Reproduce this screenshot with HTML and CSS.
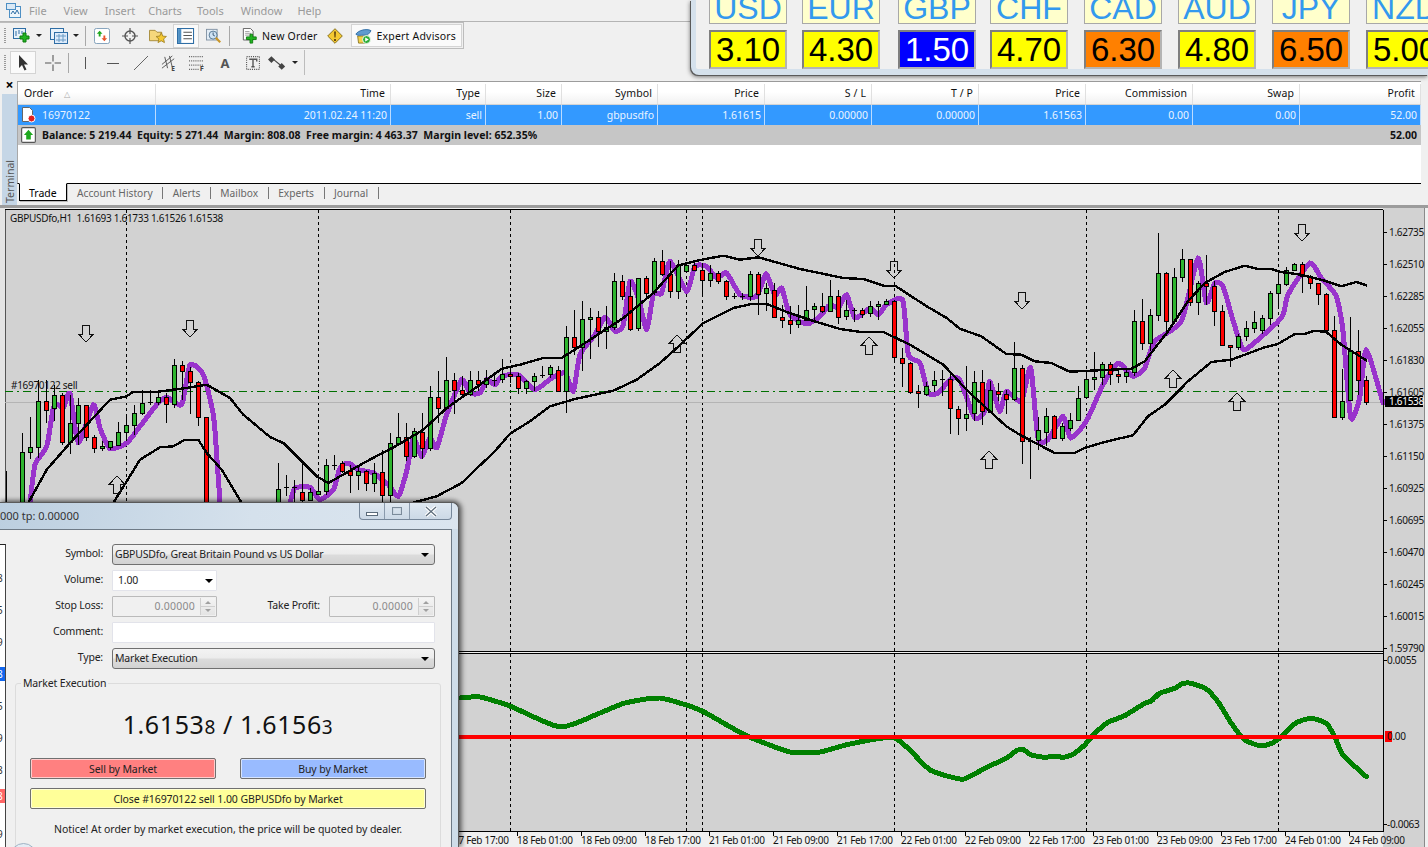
FILE: index.html
```html
<!DOCTYPE html>
<html lang="en">
<head>
    <meta charset="UTF-8">
    <meta name="viewport" content="width=device-width, initial-scale=1.0">
    <title>MetaTrader - GBPUSDfo,H1</title>
    <link rel="stylesheet" href="styles.css">
</head>
<body>
    <div class="app">
        <div class="menu-bar">
            <svg class="menu-logo" viewBox="0 0 15 15"><rect x="3.5" y="3.5" width="11" height="11" fill="#eef5fb" stroke="#4d8fc4"/><rect x=".5" y=".5" width="9" height="6" fill="#dbe9f5" stroke="#4d8fc4"/><path d="M5 11l2-3 2 3 2-4 2 4" fill="none" stroke="#2f6ea5"/></svg>
            <span class="menu-item">File</span>
            <span class="menu-item">View</span>
            <span class="menu-item">Insert</span>
            <span class="menu-item">Charts</span>
            <span class="menu-item">Tools</span>
            <span class="menu-item">Window</span>
            <span class="menu-item">Help</span>
        </div>

        <div class="bar bar-main">
            <span class="grip"></span>
            <div class="tool tool-drop">
                <svg class="ico" viewBox="0 0 18 16"><rect x=".5" y=".5" width="12" height="10" fill="#e8f2fb" stroke="#2f6ea5"/><path d="M3 3v5M6 2v4M9 3v3" stroke="#2f6ea5"/><path d="M10 5h3v3h3v3h-3v3h-3v-3H7V8h3z" fill="#22b422" stroke="#0d7a0d"/></svg>
                <span class="caret"></span>
            </div>
            <div class="tool tool-drop">
                <svg class="ico" viewBox="0 0 18 16"><rect x=".5" y=".5" width="13" height="11" fill="#e8f2fb" stroke="#2f6ea5"/><rect x="4.5" y="4.5" width="13" height="11" fill="#dceafa" stroke="#2f6ea5"/><path d="M6 8h10M6 12h10M9 6v8M13 6v8" stroke="#6b9cc5"/></svg>
                <span class="caret"></span>
            </div>
            <span class="sep"></span>
            <div class="tool">
                <svg class="ico" viewBox="0 0 17 17"><rect x=".5" y=".5" width="16" height="16" rx="2" fill="#fff" stroke="#7d9db8"/><path d="M6 3l3 3H7v3H5V6H3z" fill="#1ea81e"/><path d="M11 14l-3-3h2V8h2v3h2z" fill="#e8552a"/></svg>
            </div>
            <div class="tool">
                <svg class="ico" viewBox="0 0 16 16"><circle cx="8" cy="8" r="5" fill="none" stroke="#555" stroke-width="1.4"/><path d="M8 0v6M8 10v6M0 8h6M10 8h6" stroke="#555" stroke-width="1.2"/></svg>
            </div>
            <div class="tool">
                <svg class="ico" viewBox="0 0 19 17"><path d="M.5 2.5h6l2 2h5v9H.5z" fill="#f5d77c" stroke="#a58a3a"/><path d="M13 5l1.6 3.6 3.9.4-3 2.6.9 3.9-3.400-2-3.400 2 .9-3.900-3-2.600 3.900-.4z" fill="#f5c932" stroke="#a5862a"/></svg>
            </div>
            <div class="tool tool-on">
                <svg class="ico" viewBox="0 0 16 15"><rect x=".5" y=".5" width="15" height="14" fill="#fff" stroke="#2f6ea5"/><rect x="1" y="1" width="3" height="13" fill="#4d8fc4"/><path d="M6 4h8M6 7h8M6 10h8" stroke="#555"/></svg>
            </div>
            <div class="tool">
                <svg class="ico" viewBox="0 0 18 18"><rect x=".5" y="1.500" width="12" height="12" fill="#e3edf6" stroke="#7d8fa0"/><circle cx="8" cy="8" r="4.500" fill="#cfe3f4" stroke="#4d6f8c"/><path d="M8 5v3l2 1" fill="none" stroke="#2f4f6c"/><path d="M11 11l5 5" stroke="#c9962a" stroke-width="2.500"/></svg>
            </div>
            <span class="sep sep-order"></span>
            <div class="tool-text">
                <svg class="ico" viewBox="0 0 17 18"><path d="M1.500.5h8l3 3v10h-11z" fill="#fff" stroke="#555"/><path d="M3.500 4h5M3.500 6h7M3.500 8h7" stroke="#999"/><path d="M9 7h3v3h4v3h-4v4H9v-4H5v-3h4z" fill="#22b422" stroke="#0d7a0d"/></svg>
                <span>New Order</span>
            </div>
            <svg class="ico ico-warn" viewBox="0 0 16 16"><path d="M8 .7L15.300 8 8 15.300.7 8z" fill="#f5c932" stroke="#8a7420"/><path d="M7 3.500h2l-.4 6H7.400zM7 11h2v2H7z" fill="#6b4d10"/></svg>
            <div class="tool-text tool-ea">
                <svg class="ico" viewBox="0 0 19 18"><path d="M3 9h12l-1 8H4z" fill="#f5d24a" stroke="#8a7420"/><path d="M1 7c2-4 12-7 17-4-1 3-4 5-8 5S3 9 1 7z" fill="#5f9bcf" stroke="#2f6ea5"/><circle cx="13" cy="13" r="4.500" fill="#2fae3a" stroke="#fff"/><path d="M11.500 10.800l4 2.200-4 2.200z" fill="#fff"/></svg>
                <span>Expert Advisors</span>
            </div>
        </div>

        <div class="bar bar-draw">
            <span class="grip"></span>
            <div class="tool tool-on tool-cursor">
                <svg class="ico" viewBox="0 0 11 16"><path d="M1 0v13l3-3 2.500 5.500 2-1L6 9.500h4z" fill="#333"/></svg>
            </div>
            <div class="tool tool-cross">
                <svg class="ico" viewBox="0 0 15 15"><path d="M7.500 0v6M7.500 9v6M0 7.500h6M9 7.500h6" stroke="#555"/></svg>
            </div>
            <span class="sep"></span>
            <div class="tool"><svg class="ico" viewBox="0 0 16 16"><path d="M8.500 2v12" stroke="#555"/></svg></div>
            <div class="tool"><svg class="ico" viewBox="0 0 16 16"><path d="M2 8.500h12" stroke="#555"/></svg></div>
            <div class="tool"><svg class="ico" viewBox="0 0 16 16"><path d="M1 15L15 1" stroke="#666"/></svg></div>
            <div class="tool">
                <svg class="ico" viewBox="0 0 17 17"><path d="M1 10L12 1M1 14L14 4M4 2l3 12M9 1l3 12" stroke="#555" fill="none"/><text class="ico-letter" x="11" y="16.500">E</text></svg>
            </div>
            <div class="tool">
                <svg class="ico" viewBox="0 0 15 15"><path d="M0 1.500h14M0 5.500h14M0 9.500h14M0 13.500h9" stroke="#666" stroke-dasharray="1 1"/><text class="ico-letter" x="10" y="15">F</text></svg>
            </div>
            <div class="tool"><span class="glyph-a">A</span></div>
            <div class="tool">
                <svg class="ico" viewBox="0 0 15 15"><rect x="1.500" y="1.500" width="12" height="12" fill="none" stroke="#555" stroke-dasharray="1 1"/><path d="M4 4h7v2M7.500 4v7M6 11h3" fill="none" stroke="#555" stroke-width="1.300"/></svg>
            </div>
            <div class="tool tool-arrows">
                <svg class="ico" viewBox="0 0 16 14"><path d="M3 1l3 3-3 3-3-3z" fill="#444"/><path d="M12 7l3 3-3 3-3-3z" fill="#444"/><path d="M5 4l6 5" stroke="#444"/></svg>
                <span class="caret"></span>
            </div>
        </div>

        <div class="terminal">
            <div class="term-side">
                <span class="term-close">&#215;</span>
                <span class="term-label">Terminal</span>
            </div>
            <div class="term-main">
                <div class="orders">
                    <div class="row row-head">
                        <span class="cell cell-left">Order <i class="sort-mark">&#9651;</i></span>
                        <span class="cell">Time</span>
                        <span class="cell">Type</span>
                        <span class="cell">Size</span>
                        <span class="cell">Symbol</span>
                        <span class="cell">Price</span>
                        <span class="cell">S / L</span>
                        <span class="cell">T / P</span>
                        <span class="cell">Price</span>
                        <span class="cell">Commission</span>
                        <span class="cell">Swap</span>
                        <span class="cell">Profit</span>
                    </div>
                    <div class="row row-order">
                        <span class="cell cell-left">
                            <svg class="row-ico" viewBox="0 0 15 16"><path d="M1.500.5h7l3 3v11h-10z" fill="#fff" stroke="#666"/><circle cx="10.500" cy="11.500" r="3.500" fill="#e02020" stroke="#fff"/></svg>
                            16970122
                        </span>
                        <span class="cell">2011.02.24 11:20</span>
                        <span class="cell">sell</span>
                        <span class="cell">1.00</span>
                        <span class="cell">gbpusdfo</span>
                        <span class="cell">1.61615</span>
                        <span class="cell">0.00000</span>
                        <span class="cell">0.00000</span>
                        <span class="cell">1.61563</span>
                        <span class="cell">0.00</span>
                        <span class="cell">0.00</span>
                        <span class="cell">52.00</span>
                    </div>
                    <div class="row-balance">
                        <svg class="row-ico" viewBox="0 0 13 14"><rect x=".5" y=".5" width="12" height="13" rx="1" fill="#fff" stroke="#555"/><path d="M6.500 2.500l4 4.500H8.500v4h-4V7h-2z" fill="#1ea81e"/></svg>
                        <span class="balance-text">Balance: 5 219.44&nbsp; Equity: 5 271.44&nbsp; Margin: 808.08&nbsp; Free margin: 4 463.37&nbsp; Margin level: 652.35%</span>
                        <span class="balance-total">52.00</span>
                    </div>
                </div>
                <div class="tabs">
                    <span class="tab tab-on">Trade</span>
                    <span class="tab">Account History</span>
                    <span class="tab">Alerts</span>
                    <span class="tab">Mailbox</span>
                    <span class="tab">Experts</span>
                    <span class="tab">Journal</span>
                </div>
            </div>
        </div>

        <svg class="chart" id="chart" viewBox="0 208 1428 639" xmlns="http://www.w3.org/2000/svg"></svg>
    </div>

    <div class="meter">
        <div class="meter-col"><div class="cur">USD</div><div class="val">3.10</div></div>
        <div class="meter-col"><div class="cur">EUR</div><div class="val">4.30</div></div>
        <div class="meter-col"><div class="cur">GBP</div><div class="val val-low">1.50</div></div>
        <div class="meter-col"><div class="cur">CHF</div><div class="val">4.70</div></div>
        <div class="meter-col"><div class="cur">CAD</div><div class="val val-high">6.30</div></div>
        <div class="meter-col"><div class="cur">AUD</div><div class="val">4.80</div></div>
        <div class="meter-col"><div class="cur">JPY</div><div class="val val-high">6.50</div></div>
        <div class="meter-col"><div class="cur">NZD</div><div class="val">5.00</div></div>
    </div>

    <div class="dialog">
        <div class="dlg-title">
            <span class="dlg-caption">000 tp: 0.00000</span>
            <div class="dlg-btns">
                <span class="dlg-btn dlg-min"><i></i></span>
                <span class="dlg-btn dlg-max"><i></i></span>
                <span class="dlg-btn dlg-close">
                    <svg viewBox="0 0 14 11"><path d="M2 1l10 9M12 1L2 10" stroke="#fff" stroke-width="3.500"/><path d="M2 1l10 9M12 1L2 10" stroke="#5b6b7a" stroke-width="1.200"/></svg>
                </span>
            </div>
        </div>
        <div class="dlg-body">
            <div class="tick-strip">
                <span class="tick">8</span>
                <span class="tick">5</span>
                <span class="tick">9</span>
                <span class="tick tick-ask">8</span>
                <span class="tick">5</span>
                <span class="tick">9</span>
                <span class="tick">8</span>
                <span class="tick tick-bid">8</span>
                <span class="tick">9</span>
            </div>

            <div class="form">
                <label class="lbl">Symbol:</label>
                <div class="select field-wide">GBPUSDfo, Great Britain Pound vs US Dollar</div>

                <label class="lbl">Volume:</label>
                <div class="input input-drop">1.00</div>
                <span></span><span></span>

                <label class="lbl">Stop Loss:</label>
                <div class="input input-off">0.00000<span class="spin"></span></div>
                <label class="lbl">Take Profit:</label>
                <div class="input input-off">0.00000<span class="spin"></span></div>

                <label class="lbl">Comment:</label>
                <div class="input field-wide"></div>

                <label class="lbl">Type:</label>
                <div class="select field-wide">Market Execution</div>
            </div>

            <div class="group">
                <span class="group-title">Market Execution</span>
                <div class="quote">1.6153<small>8</small> / 1.6156<small>3</small></div>
                <div class="deal-row">
                    <div class="deal deal-sell">Sell by Market</div>
                    <div class="deal deal-buy">Buy by Market</div>
                </div>
                <div class="deal deal-close">Close #16970122 sell 1.00 GBPUSDfo by Market</div>
                <p class="notice">Notice! At order by market execution, the price will be quoted by dealer.</p>
            </div>
            <span class="help-disc"></span>
        </div>
    </div>

    <script src="chart.js"></script>
</body>
</html>
```

FILE: styles.css
```css
* {
    margin: 0;
    padding: 0;
    box-sizing: border-box;
}

html, body {
    height: 100%;
    overflow: hidden;
}

body {
    font-family: "Noto Sans", "Liberation Sans", sans-serif;
    font-size: 10.5px;
    background: #f0f0f0;
    color: #000;
    position: relative;
}

.app {
    display: flex;
    flex-direction: column;
    height: 847px;
}

/* menu */
.menu-bar {
    height: 22px;
    display: flex;
    align-items: center;
    padding-left: 6px;
    border-bottom: 1px solid #b4b4b4;
    background: #f0f0f0;
}

.menu-logo {
    width: 15px;
    height: 15px;
    margin-right: 8px;
}

.menu-item {
    color: #9a9a9a;
    font-size: 11px;
    margin-right: 17px;
}

.menu-item:nth-child(4) { margin-right: 13px; }
.menu-item:nth-child(5) { margin-right: 15px; }
.menu-item:nth-child(7) { margin-right: 15px; }

/* toolbars */
.bar {
    display: flex;
    align-items: center;
    position: relative;
    border: 1px solid #bcbcbc;
    border-left: 0;
    background: #f0f0f0;
}

.bar-main {
    width: 464px;
    height: 27px;
    margin-bottom: 1px;
}

.bar-draw {
    width: 305px;
    height: 25px;
    border-top: 0;
    border-bottom: 0;
}

.grip {
    width: 2px;
    height: 16px;
    margin: 0 4px;
    background: repeating-linear-gradient(to bottom, #9a9a9a 0 1px, transparent 1px 2px);
    flex: none;
}

.tool {
    width: 28px;
    height: 24px;
    display: flex;
    align-items: center;
    justify-content: center;
    flex: none;
}

.tool-drop {
    width: 37px;
    justify-content: flex-start;
    padding-left: 3px;
}

.tool-on {
    width: 26px;
    margin: 0 1px;
    background: #fafafa;
    border: 1px solid #d4d4d4;
}

.tool-cursor {
    margin: 0;
    height: 23px;
}

.tool-cross {
    margin-left: 3px;
}

.tool-arrows {
    width: 32px;
}

.ico {
    height: 16px;
    width: auto;
    flex: none;
}

.ico-warn {
    margin-left: 9px;
    margin-right: 8px;
}

.ico-letter {
    font-size: 7px;
    font-weight: bold;
    fill: #444;
}

.glyph-a {
    font-size: 13px;
    font-weight: bold;
    color: #555;
}

.caret {
    width: 0;
    height: 0;
    border-left: 3px solid transparent;
    border-right: 3px solid transparent;
    border-top: 3px solid #222;
    margin-left: 5px;
}

.sep {
    width: 1px;
    height: 20px;
    background: #a8a8a8;
    flex: none;
    margin: 0 2px 0 1px;
}

.sep-order {
    margin-left: 1px;
    margin-right: 12px;
}

.tool-text {
    display: flex;
    align-items: center;
    gap: 5px;
    color: #111;
    font-size: 10.5px;
    letter-spacing: 0.2px;
    white-space: nowrap;
}

.tool-ea {
    height: 23px;
    padding: 0 5px 0 3px;
    background: #fafafa;
    border: 1px solid #d4d4d4;
}

/* terminal */
.terminal {
    height: 130px;
    margin-top: 3px;
    display: flex;
    padding-left: 2px;
    padding-right: 7px;
    border-bottom: 3px solid #9c9c9c;
}

.term-side {
    width: 15px;
    display: flex;
    flex-direction: column;
    align-items: center;
    background: #c5d6e6;
    justify-content: space-between;
    padding-bottom: 2px;
}

.term-close {
    width: 100%;
    height: 16px;
    background: #f0f0f0;
    font-weight: bold;
    font-size: 14px;
    line-height: 14px;
    text-align: center;
}

.term-label {
    writing-mode: vertical-rl;
    transform: rotate(180deg);
    color: #555;
    font-size: 10.5px;
}

.term-main {
    flex: 1;
    display: flex;
    flex-direction: column;
    min-width: 0;
    margin-top: 3px;
    border-top: 1px solid #9c9c9c;
}

.orders {
    height: 102px;
    background: #fff;
    border-bottom: 1px solid #000;
    border-left: 1px solid #a8a8a8;
}

.row {
    display: grid;
    grid-template-columns: 138px 235px 95px 76px 96px 107px 107px 107px 107px 107px 107px 1fr;
}

.row-head {
    height: 23px;
    padding-top: 2px;
    background: linear-gradient(to bottom, #fff 0%, #fff 45%, #f1f1f1 100%);
    border-bottom: 1px solid #d4d4d4;
    color: #111;
    letter-spacing: 0.1px;
}

.row-head .cell {
    padding-right: 5px;
    border-right: 1px solid #e0e0e0;
    line-height: 19px;
}

.row-order {
    height: 20px;
    background: #3399ff;
    color: #eaf4ff;
    line-height: 20px;
}

.row-order .cell {
    padding-right: 3px;
    border-right: 1px solid #bcdcff;
}

.cell {
    text-align: right;
    white-space: nowrap;
}

.cell-left {
    text-align: left;
    padding-left: 6px;
}

.row-order .cell-left {
    padding-left: 3px;
    display: flex;
    align-items: center;
    gap: 6px;
}

.sort-mark {
    font-style: normal;
    font-size: 8px;
    color: #aaa;
    margin-left: 8px;
}

.row-ico {
    width: 15px;
    height: 16px;
    flex: none;
}

.row-balance {
    height: 20px;
    display: flex;
    align-items: center;
    background: #c6c6c6;
    padding: 0 4px 0 3px;
    font-weight: bold;
    font-size: 10.5px;
    color: #111;
}

.balance-text {
    margin-left: 6px;
    letter-spacing: 0.05px;
    white-space: nowrap;
}

.balance-total {
    margin-left: auto;
}

.tabs {
    flex: 1;
    display: flex;
    align-items: flex-start;
    padding-left: 2px;
}

.tab {
    color: #666;
    font-size: 10.2px;
    height: 12px;
    line-height: 12px;
    padding: 0 9.5px;
    border-right: 1px solid #777;
    margin-top: 3px;
}

.tab-on {
    color: #000;
    background: #fff;
    font-size: 10.5px;
    height: 18px;
    width: 48px;
    padding: 0 9px;
    margin-top: -1px;
    margin-right: 0.5px;
    line-height: 18px;
    border: 1px solid #000;
    border-top-color: #fff;
    box-shadow: 1px 1px 0 #bbb;
}

/* chart */
.chart {
    display: block;
    width: 1428px;
    height: 639px;
    background: #f0f0f0;
    shape-rendering: crispEdges;
}

.chart-text {
    font-family: "Noto Sans", "Liberation Sans", sans-serif;
    font-size: 10px;
    letter-spacing: -0.3px;
    fill: #111;
    white-space: pre;
    shape-rendering: auto;
}

.chart-text-light {
    fill: #fff;
}

/* currency meter, sits over the top right */
.meter {
    position: absolute;
    top: 0;
    left: 691px;
    right: 0;
    height: 75px;
    padding: 0 0 6px 13px;
    display: grid;
    grid-template-columns: 93px 96px 92px 94px 94px 94px 94px 80px;
    background: #f0f0f0;
    border-left: 5px solid #d5e1ec;
    border-bottom: 6px solid #d5e1ec;
    border-bottom-left-radius: 8px;
    box-shadow: -1px 1px 0 #5a5a5a, -1px 2px 4px rgba(0, 0, 0, 0.5);
    overflow: hidden;
}

.meter-col {
    display: flex;
    flex-direction: column;
    gap: 6px;
    width: 78px;
}

.cur {
    height: 24px;
    background: #ffffcc;
    border: 1px solid #a8a8a8;
    border-top: 0;
    color: #3399ee;
    font-family: "Liberation Sans", sans-serif;
    font-size: 32px;
    line-height: 17px;
    text-align: center;
    overflow: hidden;
    white-space: nowrap;
}

.val {
    height: 39px;
    background: #ffff00;
    border: 2px solid #7f7f7f;
    border-right-color: #b4b4b4;
    border-bottom-color: #b4b4b4;
    font-family: "Liberation Sans", sans-serif;
    font-size: 33px;
    line-height: 35px;
    text-align: center;
    white-space: nowrap;
    color: #000;
}

.val-low {
    background: #0000ff;
    color: #fff;
}

.val-high {
    background: #ff8000;
}

/* order dialog */
.dialog {
    position: absolute;
    top: 502px;
    left: 0;
    width: 459px;
    height: 345px;
    background: #cfdde9;
    border-top: 1px solid #5a5a5a;
    border-right: 1px solid #5a5a5a;
    border-top-right-radius: 7px;
    box-shadow: 3px 0 5px rgba(0, 0, 0, 0.45), 0 -2px 4px rgba(0, 0, 0, 0.35);
    padding-right: 6px;
}

.dlg-title {
    height: 26px;
    display: flex;
    justify-content: space-between;
    align-items: flex-start;
    background: linear-gradient(100deg, #bccfe0 0%, #d5e1ec 55%, #dbe5ef 100%);
    margin-right: -6px;
    padding-right: 6px;
    border-top-right-radius: 7px;
}

.dlg-caption {
    font-size: 11px;
    line-height: 26px;
    color: #333;
    white-space: nowrap;
}

.dlg-btns {
    display: flex;
    height: 17px;
    border: 1px solid #76879a;
    border-top: 0;
    border-radius: 0 0 4px 4px;
    background: linear-gradient(to bottom, #dfe8f1, #ccd9e6);
}

.dlg-btn {
    width: 25px;
    display: flex;
    align-items: center;
    justify-content: center;
    border-right: 1px solid #8a9aac;
}

.dlg-min i {
    display: block;
    width: 12px;
    height: 4px;
    border: 1px solid #5b6b7a;
    background: #fff;
    margin-top: 5px;
}

.dlg-max i {
    display: block;
    width: 10px;
    height: 8px;
    border: 1px solid #7b8b9a;
    box-shadow: inset 0 0 0 1px #cdd8e3;
}

.dlg-close {
    width: 41px;
    border-right: 0;
}

.dlg-close svg {
    width: 14px;
    height: 11px;
}

.dlg-body {
    height: 318px;
    position: relative;
    background: #f0f0f0;
    border-top: 1px solid #6e7a86;
    border-right: 1px solid #6e7a86;
    overflow: hidden;
}

.tick-strip {
    position: absolute;
    top: 14px;
    left: 0;
    width: 6px;
    height: 320px;
    padding-top: 26px;
    display: flex;
    flex-direction: column;
    background: #fff;
    border-top: 1px solid #222;
    border-right: 1px solid #444;
    overflow: hidden;
}

.tick {
    height: 32px;
    line-height: 14px;
    font-size: 10px;
    text-indent: -3px;
    color: #333;
}

.tick-ask {
    color: #fff;
    background: linear-gradient(to bottom, #1166ee 14px, transparent 14px);
}

.tick-bid {
    color: #fff;
    height: 38px;
    margin-top: -6px;
    background: linear-gradient(to bottom, #ff6666 14px, transparent 14px);
}

.form {
    display: grid;
    grid-template-columns: 98px 105px 96px 106px;
    grid-auto-rows: 21px;
    column-gap: 8px;
    row-gap: 5px;
    padding: 14px 0 0 6px;
    align-items: stretch;
    letter-spacing: -0.2px;
}

.lbl {
    text-align: right;
    line-height: 19px;
    color: #222;
    padding-right: 1px;
}

.field-wide {
    grid-column: 2 / 5;
}

.select {
    border: 1px solid #707070;
    border-radius: 3px;
    background: linear-gradient(to bottom, #f3f3f3 0%, #ececec 48%, #dcdcdc 52%, #d2d2d2 100%);
    padding-left: 2px;
    line-height: 19px;
    position: relative;
    color: #222;
}

.select::after, .input-drop::after {
    content: '';
    position: absolute;
    right: 5px;
    top: 8px;
    border-left: 4px solid transparent;
    border-right: 4px solid transparent;
    border-top: 4px solid #000;
}

.input {
    position: relative;
    background: #fff;
    border: 1px solid #e2e3ea;
    border-radius: 1px;
    padding-left: 5px;
    line-height: 19px;
    color: #222;
}

.input-drop::after {
    right: 3px;
}

.input-off {
    background: #f0f0f0;
    border-color: #bababa;
    color: #8a8a8a;
    text-align: right;
    padding-right: 21px;
    letter-spacing: 0.25px;
}

.spin {
    position: absolute;
    top: 1px;
    right: 1px;
    bottom: 1px;
    width: 15px;
    border-left: 1px solid #cfcfcf;
    background:
        linear-gradient(#cfcfcf, #cfcfcf) center / 100% 1px no-repeat,
        linear-gradient(#f4f4f4, #e4e4e4);
}

.spin::before, .spin::after {
    content: '';
    position: absolute;
    left: 4px;
    border-left: 3px solid transparent;
    border-right: 3px solid transparent;
}

.spin::before {
    top: 3px;
    border-bottom: 3px solid #a0a0a0;
}

.spin::after {
    bottom: 3px;
    border-top: 3px solid #a0a0a0;
}

.group {
    position: absolute;
    top: 153px;
    left: 15px;
    width: 426px;
    height: 190px;
    padding: 17px 14px 0;
    border: 1px solid #dcdcdc;
    border-radius: 3px;
}

.group-title {
    position: absolute;
    top: -8px;
    left: 5px;
    padding: 0 2px;
    background: #f0f0f0;
    line-height: 14px;
    color: #222;
    letter-spacing: -0.15px;
}

.quote {
    height: 49px;
    line-height: 47px;
    text-align: center;
    font-size: 25px;
    color: #111;
    letter-spacing: 0.6px;
    margin-bottom: 8px;
}

.quote small {
    font-size: 19px;
}

.deal-row {
    display: flex;
    justify-content: space-between;
    margin-bottom: 9px;
}

.deal {
    height: 21px;
    border: 1px solid #707070;
    border-radius: 2px;
    box-shadow: inset 0 0 0 1px rgba(255, 255, 255, 0.6);
    text-align: center;
    line-height: 20px;
    color: #222;
    letter-spacing: -0.1px;
}

.deal-sell {
    width: 186px;
    background: #ff8080;
}

.deal-buy {
    width: 186px;
    background: #99bbff;
}

.deal-close {
    background: #ffff99;
}

.notice {
    margin-top: 12px;
    line-height: 16px;
    text-align: center;
    color: #222;
    white-space: nowrap;
    letter-spacing: -0.05px;
}

.help-disc {
    position: absolute;
    top: 313px;
    left: 10px;
    width: 27px;
    height: 27px;
    border-radius: 50%;
    background: #e4edf5;
    border: 1px solid #9fb2c4;
}
```

FILE: chart.js
```js
// Chart is drawn from points read in 3x units, offset per section of the window
const svg = document.getElementById('chart');
const NS = 'http://www.w3.org/2000/svg';

const chartLeft = 5;
const chartRight = 1383;
const chartTop = 210;
const subTop = 653;
const mainBottom = 651;
const chartBottom = 831;

function el(name, attrs, parent) {
    const node = document.createElementNS(NS, name);
    for (const key in attrs) node.setAttribute(key, attrs[key]);
    (parent || svg).appendChild(node);
    return node;
}

function line(x1, y1, x2, y2, stroke, extra) {
    return el('line', Object.assign({ x1, y1, x2, y2, stroke }, extra || {}));
}

function label(x, y, text, cls) {
    const node = el('text', { x, y, class: 'chart-text' + (cls ? ' ' + cls : '') });
    node.textContent = text;
    return node;
}

// read points: [zoomX, zoomY, ...] -> screen
function pts(offsetX, list, baseY) {
    const out = [];
    const top = baseY === undefined ? 208 : baseY;
    for (let i = 0; i < list.length; i += 2) {
        out.push([offsetX + list[i] / 3, top + list[i + 1] / 3]);
    }
    return out;
}

function poly(points, stroke, width) {
    el('polyline', {
        points: points.map(p => p[0].toFixed(1) + ',' + p[1].toFixed(1)).join(' '),
        fill: 'none',
        stroke,
        'stroke-width': width,
        'stroke-linejoin': 'round',
        'stroke-linecap': 'round'
    });
}

// hermite through the points, low tension so peaks don't overshoot
function smooth(points) {
    const s = 0.3;
    const out = [];
    for (let i = 0; i < points.length - 1; i++) {
        const p0 = points[Math.max(i - 1, 0)];
        const p1 = points[i];
        const p2 = points[i + 1];
        const p3 = points[Math.min(i + 2, points.length - 1)];
        for (let t = 0; t < 1; t += 0.2) {
            const t2 = t * t;
            const t3 = t2 * t;
            out.push([0, 1].map(k => (2 * t3 - 3 * t2 + 1) * p1[k] +
                (t3 - 2 * t2 + t) * s * (p2[k] - p0[k]) +
                (-2 * t3 + 3 * t2) * p2[k] +
                (t3 - t2) * s * (p3[k] - p1[k])));
        }
    }
    out.push(points[points.length - 1]);
    return out;
}

// background and frame
el('rect', { x: chartLeft, y: chartTop, width: chartRight - chartLeft, height: chartBottom - chartTop, fill: '#d2d2d2' });
el('rect', { x: chartRight, y: chartTop - 2, width: 41, height: 639, fill: '#d2d2d2' });
el('rect', { x: 0, y: 208, width: chartLeft, height: 639, fill: '#e4e4e4' });
el('rect', { x: 1424, y: 208, width: 4, height: 639, fill: '#f0f0f0' });
line(1424.5, 208, 1424.5, 847, '#8a8a8a');
line(chartLeft + 0.5, chartTop, chartLeft + 0.5, 847, '#555');
line(chartLeft, chartTop - 0.5, chartRight, chartTop - 0.5, '#000');

// period separators
[127, 319, 511, 687, 703, 895, 1087, 1279].forEach(x => {
    line(x - 0.5, chartTop, x - 0.5, chartBottom, '#000', { 'stroke-dasharray': '3 3' });
});

// current price and open order level
line(chartLeft, 402.5, chartRight, 402.5, '#b4b4b4');
line(chartLeft, 391.5, chartRight, 391.5, '#007000', { 'stroke-dasharray': '8 4 2 4' });

// purple average
const purple = [
    pts(0, [90, 885, 105, 770, 140, 715, 160, 600, 175, 590, 190, 600, 210, 555, 235, 705, 280, 590, 300, 660, 330, 722, 380, 705, 420, 655, 470, 590, 500, 568, 545, 590, 570, 470, 610, 500, 640, 620, 650, 740, 660, 885]),
    pts(0, [870, 885, 885, 840, 930, 838, 960, 875, 1000, 845, 1020, 780, 1045, 765, 1075, 785, 1120, 795, 1165, 830, 1195, 865, 1220, 790, 1240, 690, 1265, 745, 1290, 690, 1310, 720, 1340, 620, 1385, 515, 1410, 555])
        .concat(pts(480, [0, 555, 20, 515, 45, 530, 65, 505, 115, 500, 165, 545, 215, 510, 255, 495, 280, 550, 300, 440, 345, 380, 375, 328, 405, 370, 430, 350, 450, 220, 475, 270, 500, 365, 520, 260, 545, 255, 570, 160, 620, 250, 645, 175, 680, 175, 710, 210, 740, 195, 780, 260, 830, 265, 858, 198, 885, 262, 905, 240, 930, 320, 980, 348, 1020, 325, 1050, 290, 1075, 300, 1100, 260, 1125, 330, 1170, 300, 1195, 320, 1220, 290, 1268, 275, 1285, 440, 1320, 465, 1345, 555, 1375, 555, 1410, 515]))
        .concat(pts(948, [35, 515, 80, 630, 110, 610, 125, 520, 155, 610, 175, 550, 220, 580, 248, 478, 270, 690, 300, 695, 345, 625, 368, 690, 415, 640, 465, 530, 510, 465, 555, 505, 590, 480, 620, 400, 700, 340, 750, 150, 775, 285, 800, 225, 825, 235, 850, 320, 880, 415, 900, 420, 1000, 330, 1020, 260, 1085, 165, 1120, 210, 1165, 265, 1185, 370, 1208, 630, 1235, 570, 1255, 425, 1305, 585]))
];
purple.forEach(p => poly(smooth(p), '#9933cc', 5));

// candles: high, body top, body bottom, low, colour. spacing is 8px
const candles = [
    [675,733,1000,1000,'g'],[628,718,733,752,'g'],[515,580,718,750,'g'],[515,580,605,645,'r'],[530,560,600,640,'g'],
    [555,560,703,710,'r'],[560,646,703,738,'g'],[570,590,646,710,'g'],[590,590,688,700,'r'],[680,688,720,735,'r'],
    [700,715,721,730,'g'],[700,700,716,725,'g'],[643,673,712,712,'g'],[620,652,673,700,'g'],[590,616,652,680,'g'],
    [545,584,616,620,'g'],[545,581,581,590,'g'],[555,566,581,590,'g'],[555,566,589,645,'r'],[453,472,589,600,'g'],
    [460,472,490,575,'r'],[478,490,523,618,'r'],[520,523,628,653,'r'],[628,628,1000,1000,'r'],
    null,null,null,null,null,null,null,null,
    [765,842,1000,1000,'g'],[800,838,838,865,'g'],[815,838,838,885,'g'],[765,853,877,885,'r'],[840,853,875,880,'g'],
    [800,848,857,860,'g'],[752,770,848,860,'g'],[740,770,770,785,'g'],[760,765,788,795,'r'],[770,788,800,855,'r'],
    [770,790,800,845,'g'],[785,790,826,848,'r'],[765,796,826,852,'g'],[725,793,862,885,'r'],[675,706,862,885,'g'],
    [615,686,704,712,'g'],[645,686,745,760,'r'],[660,670,745,750,'g'],[615,673,721,752,'r'],[535,568,721,730,'g'],
    [490,568,600,645,'r'],[447,517,600,605,'g'],[495,515,547,617,'r'],[505,547,558,568,'r'],[490,515,558,565,'g'],
    [490,515,528,548,'r'],[487,509,529,540,'g'],[500,515,515,535,'g'],[453,497,514,525,'g'],[480,497,505,525,'r'],
    [495,505,541,557,'r'],[515,520,541,557,'g'],[495,503,520,548,'g'],[475,500,500,510,'g'],[472,478,499,510,'g'],
    [475,485,550,553,'r'],[355,388,550,615,'g'],[305,388,418,440,'r'],[280,334,418,488,'g'],[300,328,334,452,'g'],
    [310,328,370,417,'r'],[295,358,370,422,'g'],[195,220,358,365,'g'],[200,220,265,275,'r'],[215,265,364,368,'r'],
    [210,211,361,370,'g'],[205,211,256,268,'r'],[150,160,253,260,'g'],[127,160,199,205,'r'],[160,199,250,270,'r'],
    [157,172,250,272,'g'],[165,172,190,195,'g'],[160,172,187,190,'r'],[165,187,217,265,'r'],[170,196,217,238,'g'],
    [190,196,220,228,'r'],[215,220,265,276,'r'],[255,264,264,272,'g'],[255,264,264,275,'g'],[190,199,265,280,'g'],
    [192,199,257,320,'r'],[225,241,256,308,'g'],[225,245,328,330,'r'],[290,328,337,360,'r'],[295,337,348,378,'r'],
    [290,337,348,360,'g'],[235,305,337,340,'g'],[285,293,304,335,'g'],[255,293,310,315,'r'],[217,263,310,312,'g'],
    [247,263,328,347,'r'],[275,305,325,335,'g'],[300,305,305,342,'g'],[300,305,318,330,'r'],[278,293,316,328,'g'],
    [280,287,295,335,'g'],[272,278,287,290,'g'],[275,278,448,465,'r'],[420,450,466,537,'r'],[462,466,551,557,'r'],
    [530,550,555,600,'r'],[522,533,557,565,'g'],[490,515,532,552,'g'],[485,514,514,565,'g'],[490,514,600,678,'r'],
    [595,604,631,680,'r'],[475,617,631,670,'g'],[490,523,615,640,'g'],[485,523,610,650,'r'],[518,547,611,615,'g'],
    [525,550,559,580,'r'],[545,559,574,618,'r'],[403,481,574,578,'g'],[472,481,700,767,'r'],[688,695,700,812,'g'],
    [627,667,695,725,'g'],[600,625,673,715,'g'],[620,625,691,693,'r'],[645,655,691,700,'g'],[615,637,660,670,'g'],
    [535,571,637,640,'g'],[495,514,568,572,'g'],[433,508,514,545,'g'],[463,469,508,530,'g'],[462,469,499,530,'r'],
    [480,497,505,525,'r'],[480,493,505,525,'g'],[305,340,493,505,'g'],[272,340,405,425,'r'],[303,322,405,430,'g'],
    [75,196,322,340,'g'],[192,196,340,385,'r'],[180,207,340,345,'g'],[123,154,208,222,'g'],[152,154,283,295,'r'],
    [220,226,283,320,'g'],[140,226,235,290,'r'],[220,235,310,353,'r'],[290,310,412,415,'r'],[410,411,417,477,'r'],
    [378,385,418,425,'g'],[340,361,385,400,'g'],[310,343,361,375,'g'],[320,331,367,378,'g'],[250,256,331,350,'g'],
    [192,229,256,295,'g'],[178,185,229,235,'g'],[165,169,185,190,'g'],[163,169,205,255,'r'],[200,205,226,243,'r'],
    [225,226,257,291,'r'],[255,257,365,365,'r'],[325,365,628,628,'r'],[483,578,628,636,'g'],[327,428,577,578,'g'],
    [365,428,517,560,'r'],[503,517,583,590,'r']
];

const toY = v => 208 + Math.round(v / 3);
line(6.5, toY(790), 6.5, toY(885), '#000');
candles.forEach((c, i) => {
    if (!c) return;
    const x = 22 + 8 * i;
    const top = toY(c[1]);
    const bottom = toY(c[2]);
    line(x + 0.5, toY(c[0]), x + 0.5, toY(c[3]), '#000');
    if (top === bottom) {
        line(x - 2, top + 0.5, x + 3, top + 0.5, '#000');
        return;
    }
    el('rect', {
        x: x - 1.5,
        y: top + 0.5,
        width: 4,
        height: bottom - top,
        fill: c[4] === 'g' ? '#2fb52f' : '#ff0000',
        stroke: '#000'
    });
});

// black bands
const upper = pts(0, [85, 885, 140, 785, 210, 705, 330, 575, 380, 565, 400, 551, 475, 551, 560, 540, 620, 530, 690, 570, 730, 620, 810, 687, 850, 705, 950, 805, 985, 825, 1100, 760, 1195, 710, 1270, 665, 1340, 600])
    .concat(pts(480, [0, 530, 65, 482, 120, 470, 190, 450, 245, 450, 300, 415, 430, 330, 520, 255, 595, 172, 665, 155, 730, 143, 780, 155, 835, 148, 960, 183, 1090, 210, 1150, 213, 1210, 233, 1245, 233, 1340, 295, 1400, 330]))
    .concat(pts(948, [0, 333, 35, 362, 100, 385, 175, 438, 220, 440, 260, 460, 310, 465, 365, 491, 550, 482, 590, 460, 660, 370, 720, 280, 770, 225, 830, 192, 890, 173, 930, 183, 970, 183, 1000, 192, 1060, 200, 1130, 218, 1180, 235, 1225, 222, 1255, 232]));
const lowerA = pts(0, [340, 885, 420, 755, 480, 718, 520, 715, 555, 695, 595, 695, 620, 735, 665, 785, 725, 885]);
const lowerB = pts(0, [1235, 885, 1310, 865, 1385, 825])
    .concat(pts(480, [0, 772, 40, 735, 90, 677, 150, 640, 210, 595, 285, 573, 400, 548, 470, 515, 540, 465, 590, 420, 670, 345, 760, 300, 815, 288, 860, 288, 920, 312, 1010, 342, 1080, 363, 1150, 373, 1210, 372, 1290, 410, 1390, 470]))
    .concat(pts(948, [0, 485, 60, 550, 175, 655, 215, 680, 320, 735, 380, 735, 410, 720, 470, 702, 555, 682, 600, 625, 650, 590, 720, 520, 790, 462, 850, 455, 950, 418, 990, 408, 1040, 378, 1070, 378, 1100, 368, 1135, 372, 1180, 410, 1255, 457]));
[upper, lowerA, lowerB].forEach(p => poly(p, '#000', 2.4));

// signal arrows
function arrow(cx, cy, up) {
    const d = up ? 1 : -1;
    const p = [[0, -9], [7.5, -1], [3.5, -1], [3.5, 8], [-3.5, 8], [-3.5, -1], [-7.5, -1]];
    el('polygon', {
        points: p.map(q => (cx + q[0]) + ',' + (cy + q[1] * d)).join(' '),
        fill: 'none',
        stroke: '#111'
    });
}
[[86, 333], [190, 328], [758, 247], [894, 269], [1022, 300], [1302, 232]].forEach(a => arrow(a[0], a[1], false));
[[117, 485], [677, 344], [869, 346], [1173, 379], [1237, 402], [989, 460]].forEach(a => arrow(a[0], a[1], true));

// sub window
line(chartLeft, mainBottom + 0.5, chartRight, mainBottom + 0.5, '#000');
el('rect', { x: chartLeft, y: mainBottom + 1, width: chartRight - chartLeft, height: 1, fill: '#f0f0f0' });
line(chartLeft, subTop + 0.5, chartRight, subTop + 0.5, '#000');

// first stretch is in plain screen pixels, the rest read from the 3x crop
const green = [[460, 698], [480, 697], [510, 706], [560, 727], [600, 713], [625, 703], [660, 698], [700, 710], [745, 735], [790, 752], [820, 752], [850, 744], [895, 738], [930, 770], [960, 779]]
    .concat(pts(948, [60, 412, 120, 380, 175, 355, 205, 332, 225, 328, 250, 345, 290, 352, 320, 348, 345, 352, 375, 343, 410, 315, 440, 280, 480, 247, 530, 227, 590, 190, 610, 183, 635, 160, 680, 145, 705, 130, 730, 130, 775, 147, 810, 185, 850, 250, 890, 300, 940, 318, 975, 308, 1000, 290, 1045, 248, 1090, 235, 1135, 250, 1160, 290, 1185, 345, 1255, 410], 640));
poly(smooth(green), '#008000', 5);
el('rect', { x: 459, y: 735, width: chartRight - 459, height: 4, fill: '#ff0000' });

// price axis
line(chartRight + 0.5, chartTop, chartRight + 0.5, chartBottom, '#000');
const prices = ['1.62735', '1.62510', '1.62285', '1.62055', '1.61830', '1.61605', '1.61375', '1.61150', '1.60925', '1.60695', '1.60470', '1.60245', '1.60015', '1.59790'];
prices.forEach((p, i) => {
    const y = 232.5 + 32 * i;
    line(chartRight, y, chartRight + 4, y, '#000');
    label(1389, y + 3.5, p);
});
el('rect', { x: 1385, y: 396, width: 38, height: 11, fill: '#000' });
label(1389, 405, '1.61538', 'chart-text-light');

// indicator scale
line(chartRight, 660.5, chartRight + 4, 660.5, '#000');
line(chartRight, 824.5, chartRight + 4, 824.5, '#000');
label(1387, 664, '0.0055');
el('rect', { x: 1385, y: 731, width: 7, height: 11, fill: '#ff0000' });
label(1387, 740, '0.00');
label(1387, 828, '-0.0063');

// time axis
line(chartLeft, chartBottom + 0.5, chartRight + 1, chartBottom + 0.5, '#000');
const times = ['17 Feb 17:00', '18 Feb 01:00', '18 Feb 09:00', '18 Feb 17:00', '21 Feb 01:00', '21 Feb 09:00', '21 Feb 17:00', '22 Feb 01:00', '22 Feb 09:00', '22 Feb 17:00', '23 Feb 01:00', '23 Feb 09:00', '23 Feb 17:00', '24 Feb 01:00', '24 Feb 09:00'];
times.forEach((t, i) => {
    const x = 453 + 64 * i;
    line(x + 0.5, chartBottom, x + 0.5, chartBottom + 5, '#000');
    label(x, 844, t);
});

// chart captions
label(10, 222, 'GBPUSDfo,H1  1.61693 1.61733 1.61526 1.61538');
label(11, 389, '#16970122 sell');
```
